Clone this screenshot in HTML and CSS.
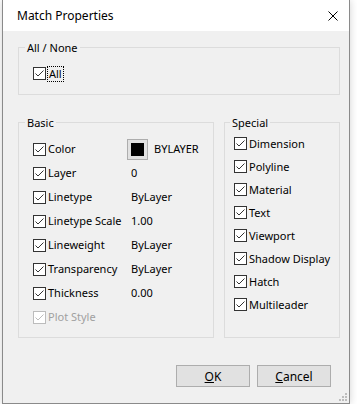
FILE: index.html
```html
<!DOCTYPE html>
<html lang="en">
<head>
  <meta charset="UTF-8">
  <title>Match Properties</title>
  <link rel="stylesheet" href="styles.css">
</head>
<body>
  <div class="window">
    <div class="titlebar">
      <span class="title">Match Properties</span>
      <span class="close">
        <svg width="10" height="10" viewBox="0 0 10 10"><path d="M0.5 0.5 L9.5 9.5 M9.5 0.5 L0.5 9.5" stroke="#000" stroke-width="1" fill="none"/></svg>
      </span>
    </div>

    <div class="content">
      <fieldset class="group group-all">
        <legend>All / None</legend>
        <div class="row">
          <span class="box"><svg viewBox="0 0 11 11"><polyline points="1.5,5.5 4,8 9.5,2.5"/></svg></span>
          <span class="label focus">All</span>
        </div>
      </fieldset>

      <div class="groups">
        <fieldset class="group basic">
          <legend>Basic</legend>
          <div class="row">
            <span class="box"><svg viewBox="0 0 11 11"><polyline points="1.5,5.5 4,8 9.5,2.5"/></svg></span>
            <span class="label name">Color</span>
            <span class="swatch"><span class="swatch-fill"></span></span>
            <span class="value">BYLAYER</span>
          </div>
          <div class="row">
            <span class="box"><svg viewBox="0 0 11 11"><polyline points="1.5,5.5 4,8 9.5,2.5"/></svg></span>
            <span class="label name">Layer</span>
            <span class="value">0</span>
          </div>
          <div class="row">
            <span class="box"><svg viewBox="0 0 11 11"><polyline points="1.5,5.5 4,8 9.5,2.5"/></svg></span>
            <span class="label name">Linetype</span>
            <span class="value">ByLayer</span>
          </div>
          <div class="row">
            <span class="box"><svg viewBox="0 0 11 11"><polyline points="1.5,5.5 4,8 9.5,2.5"/></svg></span>
            <span class="label name">Linetype Scale</span>
            <span class="value">1.00</span>
          </div>
          <div class="row">
            <span class="box"><svg viewBox="0 0 11 11"><polyline points="1.5,5.5 4,8 9.5,2.5"/></svg></span>
            <span class="label name">Lineweight</span>
            <span class="value">ByLayer</span>
          </div>
          <div class="row">
            <span class="box"><svg viewBox="0 0 11 11"><polyline points="1.5,5.5 4,8 9.5,2.5"/></svg></span>
            <span class="label name">Transparency</span>
            <span class="value">ByLayer</span>
          </div>
          <div class="row">
            <span class="box"><svg viewBox="0 0 11 11"><polyline points="1.5,5.5 4,8 9.5,2.5"/></svg></span>
            <span class="label name">Thickness</span>
            <span class="value">0.00</span>
          </div>
          <div class="row disabled">
            <span class="box"><svg viewBox="0 0 11 11"><polyline points="1.5,5.5 4,8 9.5,2.5"/></svg></span>
            <span class="label name">Plot Style</span>
          </div>
        </fieldset>

        <fieldset class="group special">
          <legend>Special</legend>
          <div class="row">
            <span class="box"><svg viewBox="0 0 11 11"><polyline points="1.5,5.5 4,8 9.5,2.5"/></svg></span>
            <span class="label">Dimension</span>
          </div>
          <div class="row">
            <span class="box"><svg viewBox="0 0 11 11"><polyline points="1.5,5.5 4,8 9.5,2.5"/></svg></span>
            <span class="label">Polyline</span>
          </div>
          <div class="row">
            <span class="box"><svg viewBox="0 0 11 11"><polyline points="1.5,5.5 4,8 9.5,2.5"/></svg></span>
            <span class="label">Material</span>
          </div>
          <div class="row">
            <span class="box"><svg viewBox="0 0 11 11"><polyline points="1.5,5.5 4,8 9.5,2.5"/></svg></span>
            <span class="label">Text</span>
          </div>
          <div class="row">
            <span class="box"><svg viewBox="0 0 11 11"><polyline points="1.5,5.5 4,8 9.5,2.5"/></svg></span>
            <span class="label">Viewport</span>
          </div>
          <div class="row">
            <span class="box"><svg viewBox="0 0 11 11"><polyline points="1.5,5.5 4,8 9.5,2.5"/></svg></span>
            <span class="label">Shadow Display</span>
          </div>
          <div class="row">
            <span class="box"><svg viewBox="0 0 11 11"><polyline points="1.5,5.5 4,8 9.5,2.5"/></svg></span>
            <span class="label">Hatch</span>
          </div>
          <div class="row">
            <span class="box"><svg viewBox="0 0 11 11"><polyline points="1.5,5.5 4,8 9.5,2.5"/></svg></span>
            <span class="label">Multileader</span>
          </div>
        </fieldset>
      </div>

      <div class="buttons">
        <button class="btn"><u>O</u>K</button>
        <button class="btn"><u>C</u>ancel</button>
      </div>
    </div>

    <svg class="grip" width="8" height="8" viewBox="0 0 8 8">
      <rect x="6" y="0" width="2" height="2"/>
      <rect x="3" y="3" width="2" height="2"/>
      <rect x="6" y="3" width="2" height="2"/>
      <rect x="0" y="6" width="2" height="2"/>
      <rect x="3" y="6" width="2" height="2"/>
      <rect x="6" y="6" width="2" height="2"/>
    </svg>
  </div>
</body>
</html>
```

FILE: styles.css
```css
body {
  margin: 0;
  background: #fff;
  font-family: "Noto Sans", "Open Sans", sans-serif;
  font-size: 11px;
  color: #000;
}
.window {
  position: relative;
  margin-left: 2px;
  width: 346px;
  height: 403px;
  background: #f0f0f0;
  border: 1px solid #8a8a8a;
  border-top: 0;
  box-shadow: 0 0 8px rgba(0,0,0,0.18);
}
.titlebar {
  height: 31px;
  background: #fff;
  display: flex;
  align-items: center;
  justify-content: space-between;
  padding: 0 10px 0 14px;
}
.title {
  font-size: 12px;
  line-height: 15px;
}
.close {
  display: flex;
  width: 10px;
  height: 10px;
  margin-right: 1px;
}
.content {
  padding: 9px 9px 0 15px;
}
.group {
  margin: 0;
  padding: 0 0 0 14px;
  border: 1px solid #dcdcdc;
  min-width: 0;
}
.group legend {
  margin-left: -8px;
  padding: 0 2px;
  line-height: 15px;
}
.group-all {
  padding-top: 12px;
  box-sizing: border-box;
  height: 55px;
}
.row {
  display: flex;
  align-items: center;
  height: 24px;
}
.group-all .row {
  height: 13px;
}
.box {
  width: 11px;
  height: 11px;
  border: 1px solid #333;
  background: #fff;
  display: flex;
  flex: none;
}
.box svg {
  width: 11px;
  height: 11px;
}
.box polyline {
  fill: none;
  stroke: #333;
  stroke-width: 1;
}
.label {
  margin-left: 2px;
  line-height: 14px;
}
.focus {
  outline: 1px dotted #000;
  outline-offset: 0;
  padding: 0 1px;
}
.groups {
  display: flex;
  gap: 10px;
  margin-top: 20px;
}
.basic {
  width: 196px;
  box-sizing: border-box;
  padding-top: 7px;
  padding-bottom: 8px;
}
.special {
  width: 116px;
  box-sizing: border-box;
  padding-left: 9px;
  padding-top: 2px;
}
.special legend {
  margin-left: -4px;
}
.special .row {
  height: 23px;
}
.name {
  width: 83px;
}
.value {
  line-height: 14px;
}
.swatch {
  width: 19px;
  height: 19px;
  border: 1px solid #adadad;
  background: #e1e1e1;
  display: flex;
  align-items: center;
  justify-content: center;
  margin-left: -4px;
  margin-right: 6px;
}
.swatch-fill {
  width: 13px;
  height: 13px;
  background: #000;
}
.disabled .label {
  color: #a0a0a0;
}
.disabled .box {
  border-color: #bcbcbc;
}
.disabled .box polyline {
  stroke: #bcbcbc;
}
.buttons {
  display: flex;
  justify-content: flex-end;
  gap: 7px;
  margin-top: 27px;
  padding-right: 9px;
}
.btn {
  width: 74px;
  height: 22px;
  background: #e1e1e1;
  border: 1px solid #adadad;
  font-family: inherit;
  font-size: 12px;
  color: #000;
  padding: 0;
}
.grip {
  position: absolute;
  right: 2px;
  bottom: 2px;
  fill: #bcbcbc;
}
```
